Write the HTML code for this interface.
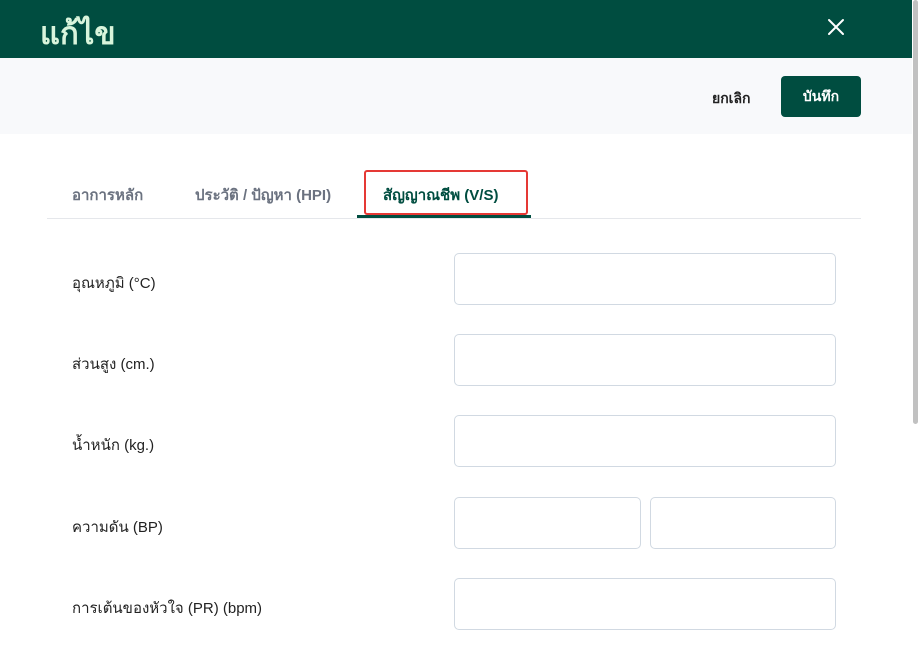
<!DOCTYPE html>
<html><head><meta charset="utf-8">
<style>
*{box-sizing:border-box;margin:0;padding:0}
body{width:920px;height:652px;overflow:hidden;background:#fff;font-family:"Liberation Sans","DejaVu Sans",sans-serif;position:relative}
.hdr{position:absolute;left:0;top:0;width:912px;height:58px;background:#004d40;}
.hdr .t{position:absolute;left:40px;top:8px;font-size:31px;font-weight:bold;color:#d9f5dc;}
.hdr .x{position:absolute;left:826px;top:17px;width:20px;height:20px}
.bar{position:absolute;left:0;top:58px;width:912px;height:76px;background:#f8f9fb}
.cancel{position:absolute;left:712px;top:88px;font-size:14px;font-weight:bold;color:#222}
.save{position:absolute;left:781px;top:76px;width:80px;height:41px;background:#004d40;border-radius:4px;color:#fff;font-size:14px;font-weight:bold;text-align:center;line-height:41px}
.tabs{position:absolute;left:47px;top:218px;width:814px;height:1px;background:#e5e7eb}
.tab{position:absolute;top:183px;font-size:15px;font-weight:bold;color:#6b7280}
.act{color:#004d40}
.ul{position:absolute;left:357px;top:215px;width:174px;height:3px;background:#004d40}
.red{position:absolute;left:364px;top:170px;width:164px;height:45px;border:2.5px solid #e53935;border-radius:3px}
.lbl{position:absolute;left:72px;font-size:15px;color:#222}
.in{position:absolute;border:1px solid #d1d9e2;border-radius:5px;height:52px;background:#fff}
.sb{position:absolute;left:913px;top:0;width:5px;height:424px;background:#c1c1c1;border-radius:3px}
</style></head><body>
<div class="hdr"><div class="t">แก้ไข</div>
<svg class="x" viewBox="0 0 20 20"><path d="M3 3L17 17M17 3L3 17" stroke="#fff" stroke-width="2" stroke-linecap="round"/></svg></div>
<div class="bar"></div>
<div class="cancel">ยกเลิก</div>
<div class="save">บันทึก</div>
<div class="tab" style="left:72px">อาการหลัก</div>
<div class="tab" style="left:195px">ประวัติ / ปัญหา (HPI)</div>
<div class="tab act" style="left:383px">สัญญาณชีพ (V/S)</div>
<div class="tabs"></div>
<div class="ul"></div>
<div class="red"></div>
<div class="lbl" style="top:271px">อุณหภูมิ (°C)</div>
<div class="in" style="left:454px;top:253px;width:382px"></div>
<div class="lbl" style="top:352px">ส่วนสูง (cm.)</div>
<div class="in" style="left:454px;top:334px;width:382px"></div>
<div class="lbl" style="top:433px">น้ำหนัก (kg.)</div>
<div class="in" style="left:454px;top:415px;width:382px"></div>
<div class="lbl" style="top:515px">ความดัน (BP)</div>
<div class="in" style="left:454px;top:497px;width:187px"></div>
<div class="in" style="left:650px;top:497px;width:186px"></div>
<div class="lbl" style="top:596px">การเต้นของหัวใจ (PR) (bpm)</div>
<div class="in" style="left:454px;top:578px;width:382px"></div>
<div class="sb"></div>
</body></html>
